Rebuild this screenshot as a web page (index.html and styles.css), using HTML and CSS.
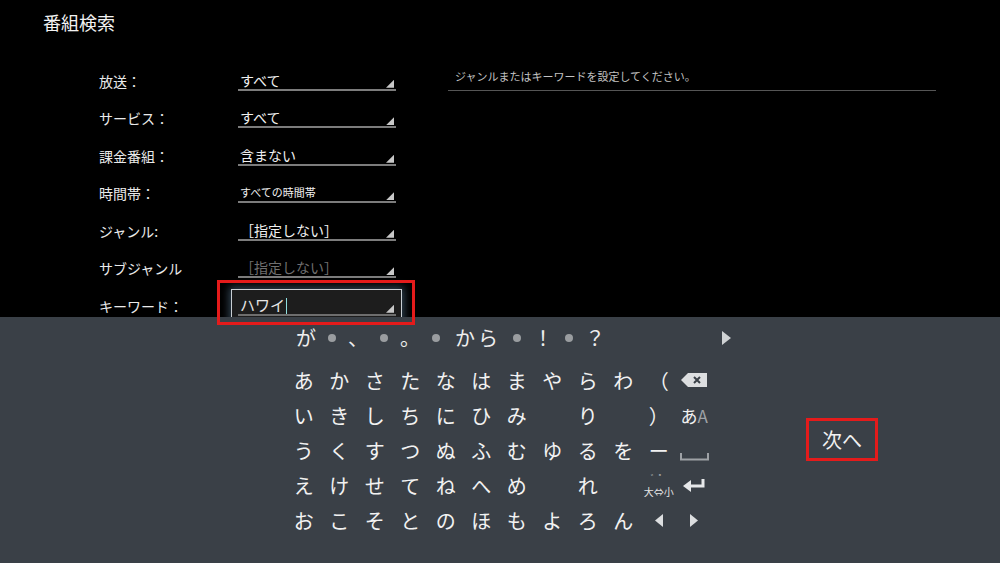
FILE: index.html
```html
<!DOCTYPE html>
<html lang="ja">
  <head>
    <meta charset="UTF-8" />
    <title>番組検索</title>
    <link rel="stylesheet" href="styles.css">
  </head>
  <body>
    <!-- SEARCH FORM -->
    <div class="search">
      <h1 class="title">番組検索</h1>
      <div class="search-body">
        <div class="form">
          <div class="row">
            <span class="label">放送：</span>
            <div class="field"><span class="value">すべて</span><span class="arrow"></span></div>
          </div>
          <div class="row">
            <span class="label">サービス：</span>
            <div class="field"><span class="value">すべて</span><span class="arrow"></span></div>
          </div>
          <div class="row">
            <span class="label">課金番組：</span>
            <div class="field"><span class="value">含まない</span><span class="arrow"></span></div>
          </div>
          <div class="row">
            <span class="label">時間帯：</span>
            <div class="field"><span class="value small">すべての時間帯</span><span class="arrow"></span></div>
          </div>
          <div class="row">
            <span class="label">ジャンル:</span>
            <div class="field"><span class="value">［指定しない］</span><span class="arrow"></span></div>
          </div>
          <div class="row">
            <span class="label">サブジャンル</span>
            <div class="field"><span class="value disabled">［指定しない］</span><span class="arrow"></span></div>
          </div>
          <div class="row">
            <span class="label">キーワード：</span>
            <div class="focus">
              <div class="field keyword"><span class="value">ハワイ<span class="caret"></span></span><span class="arrow"></span></div>
              <span class="highlight"></span>
            </div>
          </div>
        </div>
        <div class="notice">ジャンルまたはキーワードを設定してください。</div>
      </div>
    </div>

    <!-- SOFTWARE KEYBOARD -->
    <div class="ime">
      <div class="keys">
        <div class="cands">
          <span>が</span><i class="dot"></i>
          <span>、</span><i class="dot"></i>
          <span>。</span><i class="dot"></i>
          <span class="wide">から</span><i class="dot"></i>
          <span>！</span><i class="dot"></i>
          <span>？</span>
          <svg class="more" width="9" height="14" viewBox="0 0 9 14"><path d="M0 0 L9 7 L0 14 Z" fill="#cfd2d4"/></svg>
        </div>
        <div class="grid">
          <span>あ</span><span>か</span><span>さ</span><span>た</span><span>な</span><span>は</span><span>ま</span><span>や</span><span>ら</span><span>わ</span><span>（</span>
          <span><svg width="26" height="14" viewBox="0 0 26 14"><path d="M7 0 H26 V14 H7 L0 7 Z" fill="#dcdee0"/><path d="M13 4 L19 10 M19 4 L13 10" stroke="#3a4047" stroke-width="2"/></svg></span>

          <span>い</span><span>き</span><span>し</span><span>ち</span><span>に</span><span>ひ</span><span>み</span><span></span><span>り</span><span></span><span>）</span>
          <span class="mode"><b>あ</b><em>A</em></span>

          <span>う</span><span>く</span><span>す</span><span>つ</span><span>ぬ</span><span>ふ</span><span>む</span><span>ゆ</span><span>る</span><span>を</span><span>ー</span>
          <span class="space"><svg width="29" height="8" viewBox="0 0 29 8"><path d="M1 0 V6.5 H28 V0" stroke="#9ea2a6" stroke-width="2" fill="none"/></svg></span>

          <span>え</span><span>け</span><span>せ</span><span>て</span><span>ね</span><span>へ</span><span>め</span><span></span><span>れ</span><span></span>
          <span class="size"><small>゛゜</small><b>大⇔小</b></span>
          <span><svg width="22" height="14" viewBox="0 0 22 14"><path d="M20 1 V8 H6" stroke="#e6e8ea" stroke-width="3" fill="none"/><path d="M0 8 L8 2 V14 Z" fill="#e6e8ea"/></svg></span>

          <span>お</span><span>こ</span><span>そ</span><span>と</span><span>の</span><span>ほ</span><span>も</span><span>よ</span><span>ろ</span><span>ん</span>
          <span><svg width="8" height="13" viewBox="0 0 8 13"><path d="M8 0 L0 6.5 L8 13 Z" fill="#dcdee0"/></svg></span>
          <span><svg width="8" height="13" viewBox="0 0 8 13"><path d="M0 0 L8 6.5 L0 13 Z" fill="#dcdee0"/></svg></span>
        </div>
      </div>
      <div class="next">次へ</div>
    </div>
  </body>
</html>
```

FILE: styles.css
```css
* {
  box-sizing: border-box;
}

body {
  margin: 0;
  width: 1000px;
  height: 563px;
  overflow: hidden;
  background: #000;
  color: #eeeeee;
  font-family: "Noto Sans CJK JP", "Noto Sans", sans-serif;
}

/* search form */

.search {
  height: 317px;
}

.title {
  margin: 0;
  padding-left: 43px;
  font-size: 18px;
  font-weight: 400;
  line-height: 44px;
  color: #f2f2f2;
}

.search-body {
  display: flex;
  align-items: flex-start;
  padding-top: 18px;
}

.form {
  flex: none;
  width: 396px;
  padding-left: 99px;
}

.row {
  display: flex;
  align-items: center;
  height: 37.5px;
}

.label {
  width: 139px;
  flex: none;
  font-size: 14px;
  color: #eaeaea;
}

.field {
  display: flex;
  justify-content: space-between;
  align-items: flex-end;
  width: 158px;
  height: 20px;
  border-bottom: 2px solid #7c7c7c;
}

.value {
  padding-left: 2px;
  font-size: 14px;
  line-height: 18px;
  color: #f0f0f0;
}

.value.small {
  font-size: 11px;
}

.value.disabled {
  color: #6f6f6f;
}

.arrow {
  width: 8px;
  height: 8px;
  margin: 0 2px 1px 0;
  background: #c8c8c8;
  clip-path: polygon(100% 0, 100% 100%, 0 100%);
}

.focus {
  position: relative;
  flex: none;
  margin-left: -7px;
  padding: 6px 5px 6px 6px;
  border: 1px solid #c9cfd4;
  background: #1d1d1d;
  box-shadow: 0 0 8px 2px rgba(110, 150, 185, 0.45);
}

.keyword {
  border-bottom-color: #6e6e6e;
}

.keyword .value {
  font-size: 15px;
  color: #e6e6e6;
}

.caret {
  display: inline-block;
  width: 1px;
  height: 16px;
  margin-left: 1px;
  vertical-align: -3px;
  background: #8fdede;
}

.highlight {
  position: absolute;
  top: -10px;
  left: -15px;
  right: -14px;
  bottom: -3px;
  border: 3px solid #e41b1b;
  z-index: 3;
}

.notice {
  width: 488px;
  margin-left: 52px;
  padding: 7px;
  border-bottom: 1px solid #555;
  font-size: 11px;
  line-height: 14px;
  color: #c2c2c2;
}

/* keyboard */

.ime {
  position: relative;
  z-index: 1;
  display: flex;
  height: 246px;
  padding-left: 286px;
  background: #3a4047;
}

.keys {
  width: 450px;
}

.cands {
  display: flex;
  align-items: center;
  gap: 12px;
  height: 22px;
  margin-top: 10px;
  padding: 0 5px 0 10px;
  font-size: 20px;
  line-height: 22px;
}

.cands .wide {
  padding-left: 3px;
  letter-spacing: 3px;
}

.dot {
  width: 8px;
  height: 8px;
  border-radius: 50%;
  background: #9a9da0;
}

.more {
  margin-left: auto;
}

.grid {
  display: grid;
  grid-template-columns: repeat(12, 35.5px);
  grid-auto-rows: 35px;
  margin-top: 13.5px;
  font-size: 20px;
  color: #f2f2f2;
}

.grid span {
  display: flex;
  align-items: center;
  justify-content: center;
}

.mode {
  font-size: 17px;
}

.mode b {
  font-weight: 400;
  color: #f2f2f2;
}

.mode em {
  font-style: normal;
  color: #9ea2a6;
}

.space svg {
  margin-top: 14px;
}

.grid .size {
  flex-direction: column;
  padding-top: 1px;
}

.size small {
  display: block;
  font-size: 8px;
  line-height: 12px;
  color: #c8c8c8;
}

.size b {
  display: block;
  font-size: 10px;
  font-weight: 400;
  line-height: 15px;
  color: #e6e6e6;
}

.next {
  width: 72px;
  height: 43px;
  margin: 101px 0 0 70px;
  border: 3px solid #e41b1b;
  font-size: 20px;
  line-height: 37px;
  text-align: center;
  color: #f2f2f2;
}
```
